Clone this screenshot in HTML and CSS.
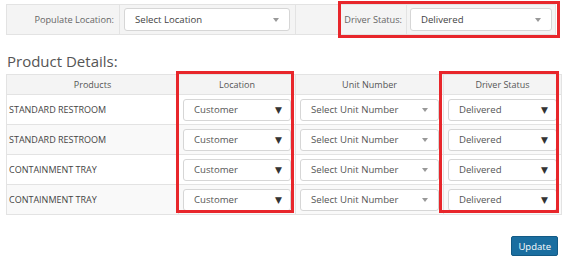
FILE: index.html
```html
<!DOCTYPE html>
<html lang="en">
<head>
  <meta charset="UTF-8" />
  <title>Product Details</title>
  <link rel="stylesheet" href="styles.css">
</head>
<body>
  <div class="page">
    <div class="filter-bar">
      <div class="cell label-cell first">Populate Location:</div>
      <div class="cell select-cell first-select">
        <div class="select light"><span>Select Location</span><i class="caret"></i></div>
      </div>
      <div class="cell label-cell second">Driver Status:</div>
      <div class="cell select-cell second-select">
        <div class="select light"><span>Delivered</span><i class="caret"></i></div>
      </div>
      <div class="highlight top-box"></div>
    </div>

    <h3 class="section-title">Product Details:</h3>

    <div class="table-wrap">
      <table class="products">
        <thead>
          <tr>
            <th class="col-product">Products</th>
            <th class="col-location">Location</th>
            <th class="col-unit">Unit Number</th>
            <th class="col-status">Driver Status</th>
          </tr>
        </thead>
        <tbody>
          <tr>
            <td>STANDARD RESTROOM</td>
            <td><div class="select"><span>Customer</span><i class="arrow">&#9660;</i></div></td>
            <td><div class="select light"><span>Select Unit Number</span><i class="caret"></i></div></td>
            <td><div class="select"><span>Delivered</span><i class="arrow">&#9660;</i></div></td>
          </tr>
          <tr>
            <td>STANDARD RESTROOM</td>
            <td><div class="select"><span>Customer</span><i class="arrow">&#9660;</i></div></td>
            <td><div class="select light"><span>Select Unit Number</span><i class="caret"></i></div></td>
            <td><div class="select"><span>Delivered</span><i class="arrow">&#9660;</i></div></td>
          </tr>
          <tr>
            <td>CONTAINMENT TRAY</td>
            <td><div class="select"><span>Customer</span><i class="arrow">&#9660;</i></div></td>
            <td><div class="select light"><span>Select Unit Number</span><i class="caret"></i></div></td>
            <td><div class="select"><span>Delivered</span><i class="arrow">&#9660;</i></div></td>
          </tr>
          <tr>
            <td>CONTAINMENT TRAY</td>
            <td><div class="select"><span>Customer</span><i class="arrow">&#9660;</i></div></td>
            <td><div class="select light"><span>Select Unit Number</span><i class="caret"></i></div></td>
            <td><div class="select"><span>Delivered</span><i class="arrow">&#9660;</i></div></td>
          </tr>
        </tbody>
      </table>
      <div class="highlight loc-box"></div>
      <div class="highlight status-box"></div>
    </div>

    <div class="actions">
      <button class="btn-update">Update</button>
    </div>
  </div>
</body>
</html>
```

FILE: styles.css
```css
body {
  margin: 0;
  font-family: "Open Sans", Arial, sans-serif;
  font-size: 9.5px;
  color: #555;
  background: #fff;
}
.page {
  padding: 4px 10px 0 6px;
}
.filter-bar {
  position: relative;
  display: flex;
  width: 550px;
  height: 31px;
  background: #f4f4f4;
  border: 1px solid #e3e3e3;
  box-sizing: border-box;
}
.cell {
  display: flex;
  align-items: center;
  box-sizing: border-box;
}
.label-cell {
  justify-content: flex-end;
  padding-right: 5px;
  font-size: 9.2px;
  color: #666;
}
.first {
  width: 113px;
  border-right: 1px solid #e3e3e3;
}
.first-select {
  width: 176px;
  padding: 0 5px 0 4px;
  border-right: 1px solid #e3e3e3;
}
.second {
  width: 111px;
  border-right: 1px solid #e3e3e3;
  padding-right: 4px;
}
.second-select {
  flex: 1;
  padding: 0 3px 0 3px;
}
.select {
  display: flex;
  align-items: center;
  justify-content: space-between;
  height: 22px;
  padding: 0 8px 0 10px;
  background: #fff;
  border: 1px solid #d6d6d6;
  border-radius: 3px;
  box-sizing: border-box;
  color: #555;
  font-size: 9.6px;
  width: 100%;
}
.filter-bar .select {
  height: 23px;
  color: #444;
}
.caret {
  width: 0;
  height: 0;
  border-left: 3px solid transparent;
  border-right: 3px solid transparent;
  border-top: 4px solid #999;
  margin-right: 2px;
}
.arrow {
  font-style: normal;
  font-size: 9px;
  color: #333;
  font-family: "DejaVu Sans", sans-serif;
}
.section-title {
  margin: 18px 0 5px 1px;
  font-weight: normal;
  font-size: 15px;
  color: #555;
  line-height: 16px;
}
.table-wrap {
  position: relative;
  width: 551px;
}
.products {
  width: 551px;
  border-collapse: collapse;
  table-layout: fixed;
}
.products th,
.products td {
  border: 1px solid #e3e3e3;
}
.products th {
  background: #f4f4f4;
  font-weight: normal;
  font-size: 9px;
  color: #555;
  height: 19px;
  padding: 0;
}
.products td {
  height: 29px;
  padding: 0 4px;
  font-size: 9px;
  color: #444;
}
.products tbody tr:nth-child(odd) {
  background: #fff;
}
.products tbody tr:nth-child(even) {
  background: #f9f9f9;
}
.products td:first-child {
  padding-left: 2px;
}
.col-product { width: 171px; }
.col-location { width: 116px; }
.col-unit { width: 147px; }
.col-status { width: 117px; }
.highlight {
  position: absolute;
  border: 3px solid #e8262b;
  box-sizing: border-box;
  pointer-events: none;
}
.top-box {
  left: 331px;
  top: -4px;
  width: 222px;
  height: 37px;
}
.loc-box {
  left: 170px;
  top: -3px;
  width: 118px;
  height: 142px;
}
.status-box {
  left: 433px;
  top: -3px;
  width: 120px;
  height: 142px;
}
.actions {
  display: flex;
  justify-content: flex-end;
  width: 552px;
  margin-top: 21px;
}
.btn-update {
  background: #1a6ea0;
  border: 1px solid #135a85;
  border-radius: 2px;
  color: #fff;
  font-family: "Open Sans", Arial, sans-serif;
  font-size: 9.5px;
  height: 20px;
  padding: 0 6px;
}
```
